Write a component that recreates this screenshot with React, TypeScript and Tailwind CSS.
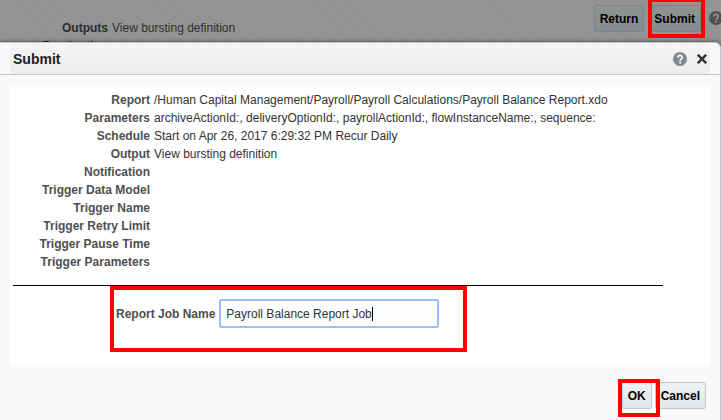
import React from 'react';

const DETAILS = [
  { label: 'Report', value: '/Human Capital Management/Payroll/Payroll Calculations/Payroll Balance Report.xdo' },
  { label: 'Parameters', value: 'archiveActionId:, deliveryOptionId:, payrollActionId:, flowInstanceName:, sequence:' },
  { label: 'Schedule', value: 'Start on Apr 26, 2017 6:29:32 PM Recur Daily' },
  { label: 'Output', value: 'View bursting definition' },
  { label: 'Notification', value: '' },
  { label: 'Trigger Data Model', value: '' },
  { label: 'Trigger Name', value: '' },
  { label: 'Trigger Retry Limit', value: '' },
  { label: 'Trigger Pause Time', value: '' },
  { label: 'Trigger Parameters', value: '' },
];

const HelpIcon: React.FC<{ className?: string; mark: string }> = ({ className, mark }) => (
  <svg viewBox="0 0 14 14" className={className} aria-hidden="true">
    <circle cx="7" cy="7" r="7" fill="currentColor" />
    <path d="M4.900 5.600a2.100 2.100 0 1 1 3.300 1.500C7.400 7.700 7.100 7.900 7.100 8.900" fill="none" stroke={mark} strokeWidth="1.700" />
    <rect x="6.200" y="9.800" width="1.800" height="1.700" fill={mark} />
  </svg>
);

const Highlight: React.FC<{ className: string }> = ({ className }) => (
  <div className={`pointer-events-none absolute border-4 border-[#ff0000] ${className}`} />
);

const PageBackdrop: React.FC = () => (
  <div className="flex h-[42px] justify-between overflow-hidden text-[#2e2e2e]">
    <dl className="grid grid-cols-[108px_auto] content-start gap-x-1 pt-[19px] text-xs leading-[18px]">
      <dt className="text-right font-bold">Outputs</dt>
      <dd>View bursting definition</dd>
      <dt className="text-right font-bold">Destination</dt>
      <dd />
    </dl>
    <div className="flex items-start gap-1 pt-[5px] text-black">
      <button type="button" className="h-[27px] rounded-xs border border-[#7b848d] bg-linear-to-b from-[#909394] to-[#888b8d] px-[5px] text-xs font-bold">
        Return
      </button>
      <div className="relative">
        <button type="button" className="h-[27px] rounded-xs border border-[#7b848d] bg-linear-to-b from-[#909394] to-[#888b8d] px-[5px] text-xs font-bold">
          Submit
        </button>
        <Highlight className="-top-[7px] -right-1 -bottom-1.5 left-0" />
      </div>
      <button type="button" aria-label="Help" className="-mr-0.5 ml-1 pt-1.5 text-[#4f5153]">
        <HelpIcon className="size-3.5" mark="#949494" />
      </button>
    </div>
  </div>
);

const SubmitDialog: React.FC = () => (
  <div role="dialog" aria-labelledby="dialog-title" className="flex grow flex-col rounded-tr-md border-t border-r border-[#b9c8d6] bg-[#f9f9f9] shadow-[0_0_4px_rgba(0,0,0,0.6)]">
    <header className="border-b border-[#b9c8d6] px-2.5">
      <div className="flex h-[31px] items-center justify-between bg-linear-to-b from-[#f5f5f5] to-[#ececec] px-[3px]">
        <h1 id="dialog-title" className="text-sm font-bold text-[#222]">Submit</h1>
        <div className="flex items-center gap-2.5">
          <button type="button" aria-label="Help" className="text-[#84888c]">
            <HelpIcon className="size-3.5" mark="#ffffff" />
          </button>
          <button type="button" aria-label="Close" className="text-[#333]">
            <svg viewBox="0 0 10 10" className="size-2.5" aria-hidden="true">
              <path d="M0.800 0.800l8.400 8.400M9.200 0.800l-8.400 8.400" stroke="currentColor" strokeWidth="2.400" />
            </svg>
          </button>
        </div>
      </div>
    </header>

    <div className="mx-2.5 mt-2.5 bg-white px-[3px] pt-1.5 pb-[13px]">
      <dl className="grid grid-cols-[137px_auto] gap-x-1 text-xs leading-[18px]">
        {DETAILS.map((row) => (
          <React.Fragment key={row.label}>
            <dt className="text-right font-bold text-[#4f4f4f]">{row.label}</dt>
            <dd>{row.value}</dd>
          </React.Fragment>
        ))}
      </dl>
      <hr className="mt-3.5 mr-11 border-black" />
      <div className="ml-[97px] flex w-[357px] items-center gap-1 border-4 border-[#ff0000] pt-[9px] pb-5 pl-0.5 text-xs">
        <label htmlFor="job-name" className="font-bold text-[#4f4f4f]">Report Job Name</label>
        <div className="relative">
          <input
            id="job-name"
            type="text"
            defaultValue="Payroll Balance Report Job"
            className="block h-[29px] w-[220px] rounded-xs border-2 border-[#9dbff5] bg-[#fcfeff] px-[5px] outline-none"
          />
          {/* text cursor */}
          <span className="pointer-events-none absolute top-2 left-[153px] h-3.5 w-px bg-black" />
        </div>
      </div>
    </div>

    <footer className="flex items-start justify-end gap-[3px] pt-[17px] pr-3.5">
      <div className="relative">
        <button type="button" className="h-[27px] rounded-xs border border-[#bccad6] bg-linear-to-b from-[#f0f3f5] to-[#dfe4e7] px-[5px] text-xs font-bold text-black">
          OK
        </button>
        <Highlight className="-top-[3px] -right-2 -bottom-2 -left-1" />
      </div>
      <button type="button" className="h-[27px] rounded-xs border border-[#bccad6] bg-linear-to-b from-[#f0f3f5] to-[#dfe4e7] px-[5px] text-xs font-bold text-black">
        Cancel
      </button>
    </footer>
  </div>
);

export default function App() {
  return (
    <div className="flex min-h-screen flex-col overflow-hidden bg-[#949494] bg-[repeating-linear-gradient(45deg,#909090_0px,#909090_1px,#969696_2px,#969696_3px)] font-['Liberation_Sans',Arial,sans-serif] text-[#333]">
      <PageBackdrop />
      <SubmitDialog />
    </div>
  );
}
